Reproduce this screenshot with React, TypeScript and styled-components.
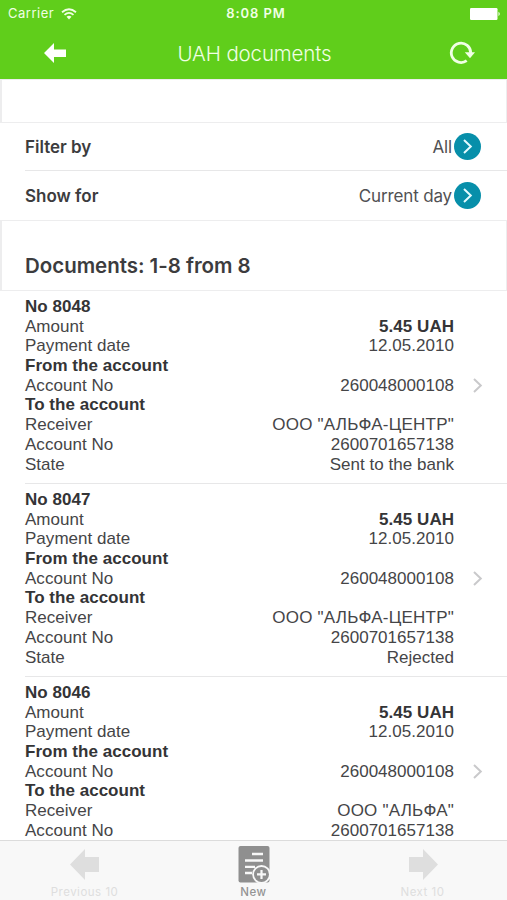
import React from "react";
import styled, { createGlobalStyle } from "styled-components";

const GlobalStyle = createGlobalStyle`
  * { box-sizing: border-box; }
  body { margin: 0; background: #fff; }
`;

const Screen = styled.div`
  width: 507px;
  height: 900px;
  display: flex;
  flex-direction: column;
  overflow: hidden;
  background: #fff;
  color: #3c3c3e;
  font-family: Inter, "Liberation Sans", sans-serif;
`;

const Header = styled.header`
  height: 79px;
  flex: none;
  background: #60ce1b;
  color: #f0ffe4;
`;

const StatusBar = styled.div`
  height: 27px;
  display: grid;
  grid-template-columns: 1fr auto 1fr;
  align-items: center;
  padding: 0 6px 0 8px;
  font-size: 13px;
  line-height: 27px;
`;

const Carrier = styled.span`
  display: flex;
  align-items: center;
  gap: 7px;
  letter-spacing: 0.52px;
`;

const Clock = styled.span`
  font-weight: 600;
  letter-spacing: 0.9px;
  margin-left: 3px;
`;

const Battery = styled.span`
  justify-self: end;
  display: flex;
`;

const NavBar = styled.div`
  height: 51px;
  display: grid;
  grid-template-columns: 44px 1fr 44px;
  align-items: center;
  padding: 0 23px 0 33px;
`;

const IconButton = styled.button`
  display: flex;
  justify-content: center;
  padding: 0;
  border: 0;
  background: none;
  color: inherit;
`;

const Title = styled.h1`
  margin: 0 0 0 -8px;
  text-align: center;
  font-size: 20.5px;
  font-weight: 300;
  line-height: 51px;
  padding-top: 1px;
  letter-spacing: -0.15px;
`;

const Box = styled.section<{ $height: number }>`
  height: ${(p) => p.$height}px;
  flex: none;
  border: 1px solid #ededee;
  border-width: 1px 1px 1px 2px;
  padding: 29px 0 0 23px;
`;

const Heading = styled.h2`
  margin: 0;
  font-size: 20.5px;
  line-height: 32px;
  font-weight: 600;
  letter-spacing: -0.03px;
`;

const Filters = styled.div`
  flex: none;
`;

const FilterRow = styled.div`
  height: 48px;
  display: flex;
  align-items: center;
  margin-left: 25px;
  padding-right: 26px;
  font-size: 17px;
  & + & { height: 49px; }
  &:not(:last-child) { border-bottom: 1px solid #e7e7e8; }
`;

const FilterName = styled.span`
  flex: 1;
  font-weight: 600;
  letter-spacing: 0;
`;

const FilterValue = styled.span`
  color: #515153;
  letter-spacing: -0.15px;
  margin-right: 2px;
`;

const Badge = styled.span`
  width: 27px;
  height: 27px;
  margin-top: -1px;
  border-radius: 50%;
  background: #078faa;
  display: grid;
  place-items: center;
`;

const List = styled.main`
  flex: 1;
  min-height: 0;
  overflow: hidden;
`;

const Record = styled.article`
  height: 193px;
  margin-left: 25px;
  padding: 6px 23px 0 0;
  border-bottom: 1px solid #e7e7e8;
  display: flex;
  align-items: flex-start;
  font-family: "Liberation Sans", Arial, sans-serif;
  font-size: 17px;
  line-height: 19.7px;
  letter-spacing: 0.03px;
`;

const Details = styled.div`
  width: 429px;
`;

const Line = styled.div<{ $strong?: boolean }>`
  height: 19.7px;
  display: flex;
  justify-content: space-between;
  white-space: nowrap;
  color: ${(p) => (p.$strong ? "#343436" : "#454547")};
  font-weight: ${(p) => (p.$strong ? 700 : 400)};
`;

const Amount = styled.strong`
  color: #343436;
`;

const Receiver = styled.span`
  letter-spacing: 0.22px;
`;

const Disclosure = styled.span`
  display: flex;
  margin: 81px 0 0 18px;
`;

const TabBar = styled.footer`
  height: 60px;
  flex: none;
  display: grid;
  grid-template-columns: repeat(3, 1fr);
  border-top: 1px solid #dcdcdc;
  background: #f8f8f8;
`;

const Tab = styled.button<{ $active?: boolean }>`
  border: 0;
  padding: 3px 0 0;
  background: none;
  display: flex;
  flex-direction: column;
  align-items: center;
  color: ${(p) => (p.$active ? "#949494" : "#dedede")};
  font: ${(p) => (p.$active ? 500 : 400)} 11.5px/16px Inter, sans-serif;
  letter-spacing: 0.5px;
`;

const TabIcon = styled.span`
  height: 40px;
  display: flex;
  align-items: center;
`;

const WifiIcon = () => (
  <svg width="16" height="12" viewBox="0 0 16 12" fill="none" stroke="currentColor" strokeWidth="1.8">
    <path d="M1 4.3Q8-1.7 15 4.3M3.5 6.9Q8 2.9 12.5 6.9" />
    <path d="M5.5 8.8Q8 6.7 10.5 8.8L8 11.4Z" fill="currentColor" stroke="none" />
  </svg>
);

const BatteryIcon = () => (
  <svg width="31" height="12" viewBox="0 0 31 12" fill="#fff">
    <rect width="27.5" height="12" rx="1.2" />
    <path d="M28.5 3.8Q31 6 28.5 8.2Z" />
  </svg>
);

const BackIcon = () => (
  <svg width="24" height="22" viewBox="0 0 24 22" fill="#fff">
    <path d="M1 11 11 1V7.4H23V14.9H11V21Z" />
  </svg>
);

const RefreshIcon = () => (
  <svg width="26" height="24" viewBox="0 0 26 24" fill="none">
    <path d="M17.7 19.7A9.7 9.7 0 1 1 21.7 12" stroke="currentColor" strokeWidth="2.8" />
    <path d="M15.8 11.3H26L21 17.2Z" fill="currentColor" />
  </svg>
);

const Chevron = ({ color }: { color: string }) => (
  <svg width="11" height="15" viewBox="0 0 11 15" fill="none" stroke={color} strokeWidth="2">
    <path d="M2 1 8.8 7.5 2 14" />
  </svg>
);

const ArrowIcon = ({ right }: { right?: boolean }) => (
  <svg width="30" height="31" viewBox="0 0 30 31" fill="currentColor">
    <path d={right ? "M30 15.5 15 0V8H1V23H15V31Z" : "M0 15.5 15 0V8H29V23H15V31Z"} />
  </svg>
);

const NewIcon = () => (
  <svg width="32" height="38" viewBox="0 0 32 38">
    <rect x="0.5" y="1" width="31" height="36.5" rx="2" fill="#8f8f8f" />
    <path d="M14 9H25M7 15.5H25M7 21.8H17M7 28H14" stroke="#f8f8f8" strokeWidth="2.3" />
    <circle cx="23.5" cy="29.4" r="9.3" fill="#f8f8f8" />
    <circle cx="23.5" cy="29.4" r="7.5" fill="#8f8f8f" />
    <path d="M19 29.4H28M23.5 24.9V33.9" stroke="#f8f8f8" strokeWidth="2.2" />
  </svg>
);

interface PaymentDocument {
  no: string;
  receiver: string;
  state?: string;
}

const documents: PaymentDocument[] = [
  { no: "8048", receiver: 'ООО "АЛЬФА-ЦЕНТР"', state: "Sent to the bank" },
  { no: "8047", receiver: 'ООО "АЛЬФА-ЦЕНТР"', state: "Rejected" },
  { no: "8046", receiver: 'ООО "АЛЬФА"' },
];

const filters = [
  { name: "Filter by", value: "All" },
  { name: "Show for", value: "Current day" },
];

export default function App() {
  return (
    <Screen>
      <GlobalStyle />
      <Header>
        <StatusBar>
          <Carrier>Carrier <WifiIcon /></Carrier>
          <Clock>8:08 PM</Clock>
          <Battery><BatteryIcon /></Battery>
        </StatusBar>
        <NavBar>
          <IconButton aria-label="Back"><BackIcon /></IconButton>
          <Title>UAH documents</Title>
          <IconButton aria-label="Refresh"><RefreshIcon /></IconButton>
        </NavBar>
      </Header>
      <Box $height={44} />
      <Filters>
        {filters.map((f) => (
          <FilterRow key={f.name}>
            <FilterName>{f.name}</FilterName>
            <FilterValue>{f.value}</FilterValue>
            <Badge><Chevron color="#e4fbff" /></Badge>
          </FilterRow>
        ))}
      </Filters>
      <Box $height={71}><Heading>Documents: 1-8 from 8</Heading></Box>
      <List>
        {documents.map((d) => (
          <Record key={d.no}>
            <Details>
              <Line $strong>No {d.no}</Line>
              <Line><span>Amount</span><Amount>5.45 UAH</Amount></Line>
              <Line><span>Payment date</span><span>12.05.2010</span></Line>
              <Line $strong>From the account</Line>
              <Line><span>Account No</span><span>260048000108</span></Line>
              <Line $strong>To the account</Line>
              <Line><span>Receiver</span><Receiver>{d.receiver}</Receiver></Line>
              <Line><span>Account No</span><span>2600701657138</span></Line>
              {d.state && <Line><span>State</span><span>{d.state}</span></Line>}
            </Details>
            <Disclosure><Chevron color="#c9c9cb" /></Disclosure>
          </Record>
        ))}
      </List>
      <TabBar>
        <Tab><TabIcon><ArrowIcon /></TabIcon>Previous 10</Tab>
        <Tab $active><TabIcon><NewIcon /></TabIcon>New</Tab>
        <Tab><TabIcon><ArrowIcon right /></TabIcon>Next 10</Tab>
      </TabBar>
    </Screen>
  );
}
